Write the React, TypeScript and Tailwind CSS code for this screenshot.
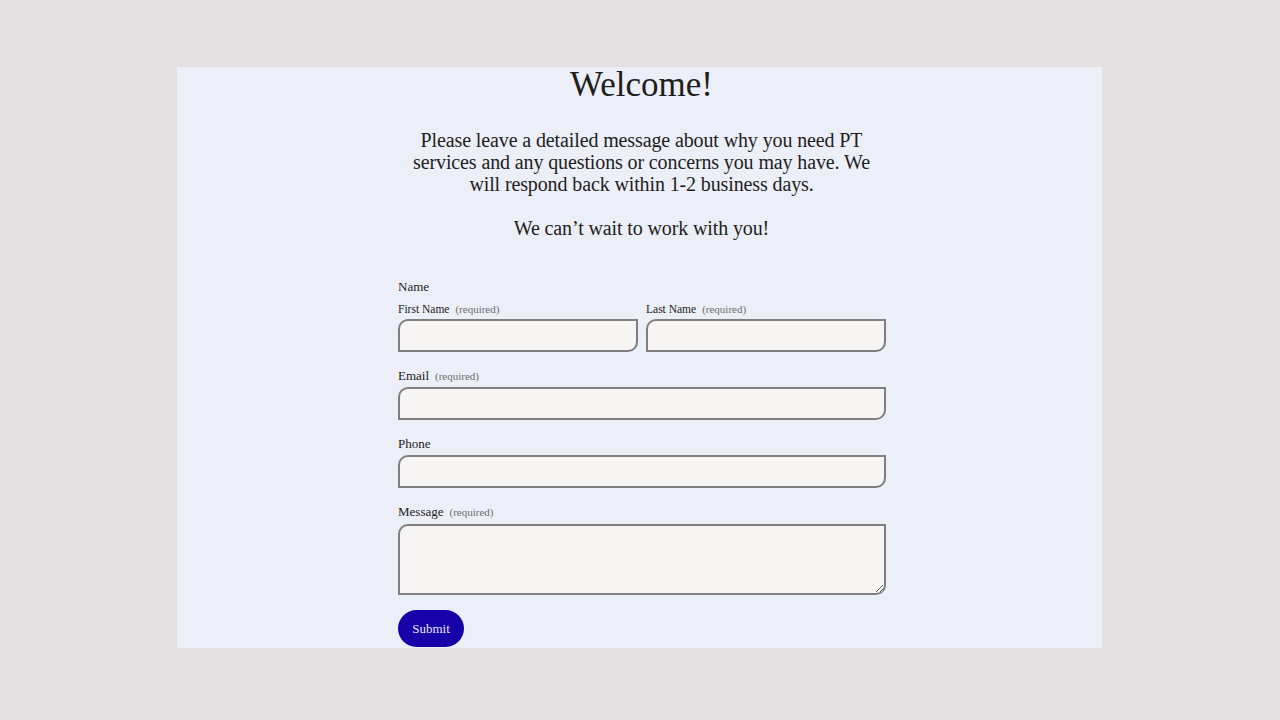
import React from "react";

const serif = { fontFamily: '"Liberation Serif", "DejaVu Serif", serif' };

function Field({ label, small, required, children }: { label: string; small?: boolean; required?: boolean; children: React.ReactNode }) {
  return (
    <div className="flex flex-col">
      <label className={small ? "mb-[3px] text-[11.5px] leading-[14px] text-[#1c1c1c]" : "mb-[3px] text-[13px] leading-[16px] text-[#1c1c1c]"}>
        {label}
        {required && <span className="ml-[6px] text-[11px] text-[#6e6e6e]">(required)</span>}
      </label>
      {children}
    </div>
  );
}

const inputCls =
  "h-[33px] w-full rounded-tl-[10px] rounded-br-[10px] border-2 border-[#7f7f7f] bg-[#f6f5f3] px-3 outline-none";

export default function App() {
  return (
    <div className="h-[720px] w-full bg-[#e3e1e1] pl-[177px] pt-[67px]" style={serif}>
      <div className="flex h-[581px] w-[925px] flex-col items-center bg-[#eceef8] text-[#1e1e1e]">
        <h1 className="-mt-[2px] ml-[4px] text-[35px] leading-[40px]">Welcome!</h1>

        <p className="ml-[4px] mt-[24px] text-center text-[20px] leading-[22px] tracking-[-0.12px]">
          Please leave a detailed message about why you need PT
          <br />
          services and any questions or concerns you may have. We
          <br />
          will respond back within 1-2 business days.
        </p>
        <p className="ml-[4px] mt-[22px] text-center text-[20px] leading-[22px] tracking-[-0.12px]">
          We can’t wait to work with you!
        </p>

        <form className="ml-[5px] mt-[40px] flex w-[488px] flex-col" onSubmit={(e) => e.preventDefault()}>
          <div className="mb-[7px] text-[13px] leading-[16px]">Name</div>
          <div className="mb-4 flex gap-2">
            <div className="flex-1">
              <Field label="First Name" small required>
                <input className={inputCls} />
              </Field>
            </div>
            <div className="flex-1">
              <Field label="Last Name" small required>
                <input className={inputCls} />
              </Field>
            </div>
          </div>

          <div className="mb-4">
            <Field label="Email" required>
              <input className={inputCls} />
            </Field>
          </div>

          <div className="mb-4">
            <Field label="Phone">
              <input className={inputCls} />
            </Field>
          </div>

          <div className="mb-[15px]">
            <Field label="Message" required>
              <textarea className="mt-[1px] block h-[71px] w-full rounded-tl-[10px] rounded-br-[10px] border-2 border-[#7f7f7f] bg-[#f6f5f3] px-3 py-2 outline-none" />
            </Field>
          </div>

          <div>
            <button
              type="submit"
              className="h-[37px] w-[66px] rounded-full bg-[#1800a8] text-[13px] text-[#ebe8ff]"
            >
              Submit
            </button>
          </div>
        </form>
      </div>
    </div>
  );
}
